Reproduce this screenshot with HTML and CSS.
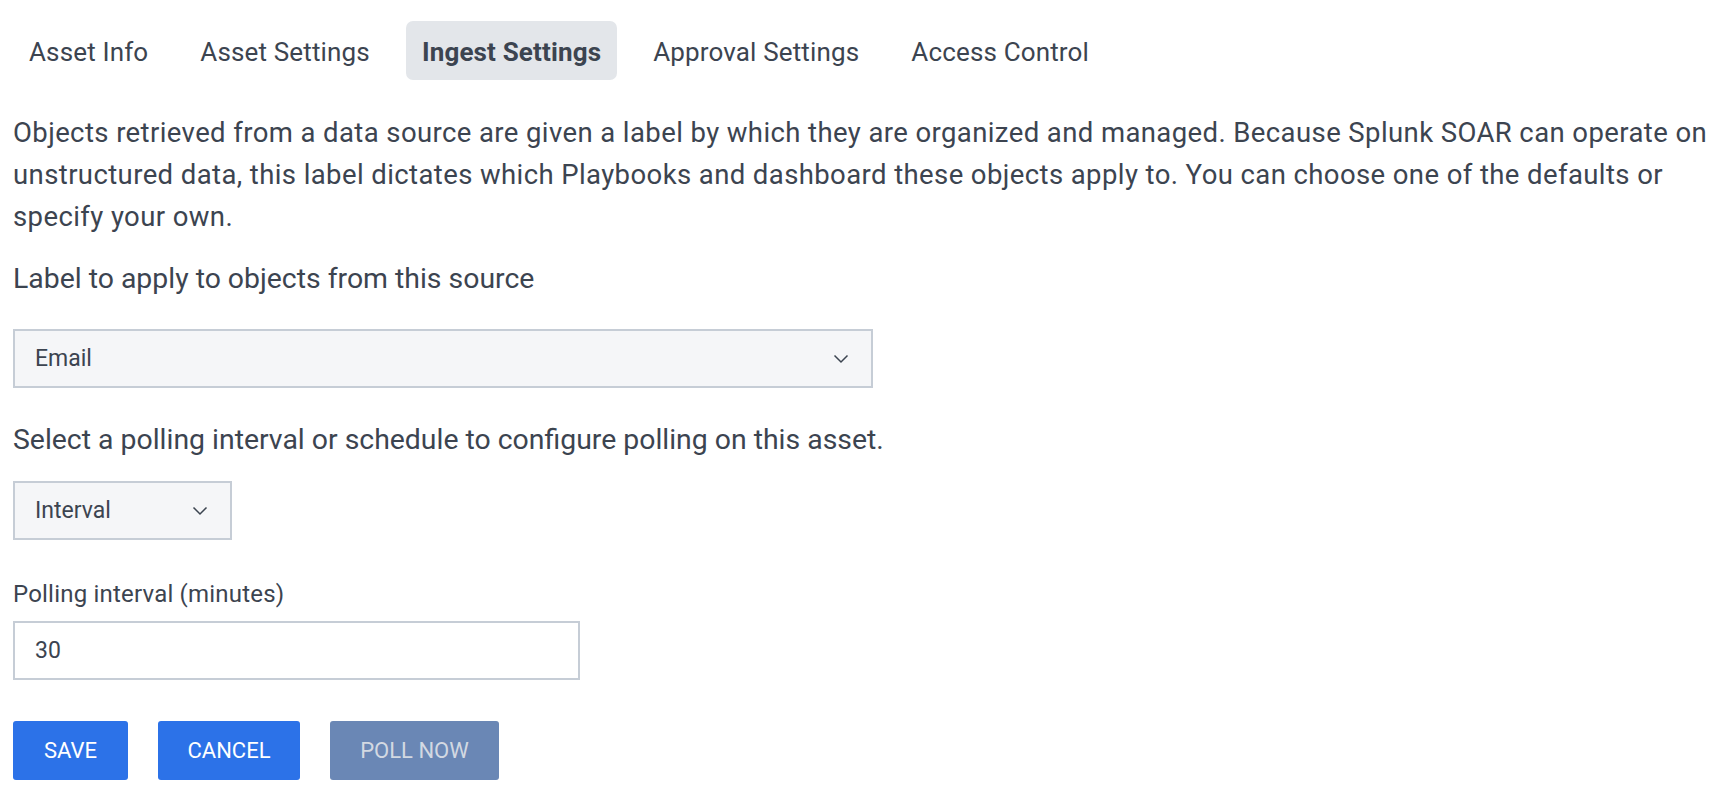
FILE: index.html
```html
<!DOCTYPE html>
<html>
<head>
<meta charset="utf-8">
<link rel="stylesheet" href="styles.css">
</head>
<body>
<div class="page">
  <nav class="tabs">
    <div class="tab">Asset Info</div>
    <div class="tab">Asset Settings</div>
    <div class="tab active">Ingest Settings</div>
    <div class="tab">Approval Settings</div>
    <div class="tab">Access Control</div>
  </nav>
  <p class="intro">Objects retrieved from a data source are given a label by which they are organized and managed. Because Splunk SOAR can operate on unstructured data, this label dictates which Playbooks and dashboard these objects apply to. You can choose one of the defaults or specify your own.</p>
  <p class="question">Label to apply to objects from this source</p>
  <div class="select select-wide">
    <span>Email</span>
    <svg class="chev" width="16" height="10" viewBox="0 0 16 10"><path d="M1.5 1.5 L8 8 L14.5 1.5" fill="none" stroke="#3c4450" stroke-width="1.5"/></svg>
  </div>
  <p class="question q2">Select a polling interval or schedule to configure polling on this asset.</p>
  <div class="select select-narrow">
    <span>Interval</span>
    <svg class="chev" width="16" height="10" viewBox="0 0 16 10"><path d="M1.5 1.5 L8 8 L14.5 1.5" fill="none" stroke="#3c4450" stroke-width="1.5"/></svg>
  </div>
  <label class="field-label">Polling interval (minutes)</label>
  <div class="input">30</div>
  <div class="actions">
    <button class="btn btn-save">SAVE</button>
    <button class="btn btn-cancel">CANCEL</button>
    <button class="btn btn-poll">POLL NOW</button>
  </div>
</div>
</body>
</html>
```
FILE: styles.css
```css
html, body {
  margin: 0;
  padding: 0;
  background: #ffffff;
}
body {
  font-family: Roboto, "Liberation Sans", sans-serif;
  color: #3c4450;
}
.page {
  padding: 21px 12px 0 13px;
}
.tabs {
  display: flex;
  gap: 20px;
}
.tab {
  box-sizing: border-box;
  font-size: 26px;
  letter-spacing: 0.15px;
  height: 59px;
  line-height: 56px;
  padding: 3px 16px 0;
  border-radius: 7px;
  color: #3c4450;
}
.tab.active {
  background: #e3e6ea;
  font-weight: 700;
}
.intro {
  margin: 32px 0 0;
  font-size: 27.5px;
  letter-spacing: 0.4px;
  line-height: 42px;
}
.question {
  margin: 20px 0 0;
  font-size: 28.4px;
  line-height: 42px;
}
.q2 {
  margin-top: 31px;
}
.select {
  box-sizing: border-box;
  height: 59px;
  border: 2px solid #c6cdd6;
  background: #f5f6f8;
  display: flex;
  align-items: center;
  justify-content: space-between;
  padding: 0 22px 0 20px;
  font-size: 23px;
}
.select-wide {
  width: 860px;
  margin-top: 29px;
}
.select-narrow {
  width: 219px;
  margin-top: 20px;
}
.chev {
  display: block;
}
.field-label {
  display: block;
  margin-top: 39px;
  font-size: 24px;
  letter-spacing: 0.2px;
  line-height: 30px;
}
.input {
  box-sizing: border-box;
  width: 567px;
  height: 59px;
  margin-top: 12px;
  border: 2px solid #c6cdd6;
  background: #fff;
  display: flex;
  align-items: center;
  padding: 0 20px;
  font-size: 23px;
}
.actions {
  display: flex;
  gap: 30px;
  margin-top: 41px;
}
.btn {
  font-family: Roboto, "Liberation Sans", sans-serif;
  height: 59px;
  border: none;
  border-radius: 3px;
  background: #2c72e8;
  color: #ffffff;
  font-size: 22px;
  font-weight: 400;
  padding: 0;
}
.btn-save { width: 115px; }
.btn-cancel { width: 142px; }
.btn-poll {
  width: 169px;
  background: #6a87b5;
  color: #d3d9e2;
}
```
